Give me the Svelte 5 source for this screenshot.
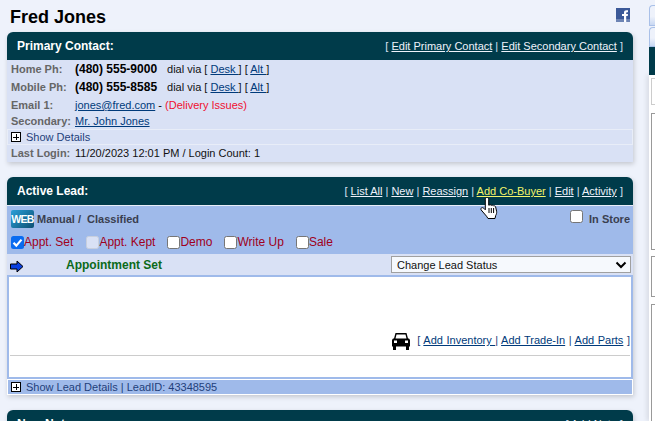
<script>
  const phones = [
    { label: 'Home Ph:', num: '(480) 555-9000' },
    { label: 'Mobile Ph:', num: '(480) 555-8585' }
  ];
  const checks = [
    { label: 'Appt. Set', kind: 'on' },
    { label: 'Appt. Kept', kind: 'off' },
    { label: 'Demo', kind: '' },
    { label: 'Write Up', kind: '' },
    { label: 'Sale', kind: '' }
  ];
</script>

<div class="page">
  <main class="col">
    <div class="title-row">
      <h1>Fred Jones</h1>
      <svg class="fb" width="14" height="14" viewBox="0 0 14 14">
        <rect width="14" height="14" fill="#3b5998" />
        <rect y="11" width="14" height="3" fill="#6d84b4" />
        <path d="M8 14V8H6V6h2V4.500C8 3 9 2.300 10.300 2.300H12v2h-1c-.6 0-.8.3-.8.8V6H12l-.3 2h-1.500v6z" fill="#fff" />
      </svg>
    </div>

    <section class="panel">
      <header>
        <b>Primary Contact:</b>
        <span class="links">[ <a href="#a">Edit Primary Contact</a> | <a href="#a">Edit Secondary Contact</a> ]</span>
      </header>
      <div class="contact">
        {#each phones as p}
          <div class="row phone">
            <span class="lbl">{p.label}</span>
            <b class="num">{p.num}</b>
            <span class="dial">dial via [ <a href="#a">Desk&nbsp;</a>] [ <a href="#a">Alt&nbsp;</a>]</span>
          </div>
        {/each}
        <div class="row email">
          <span class="lbl">Email 1:</span>
          <a href="#a">jones@fred.com</a>&nbsp;- <span class="red">(Delivery Issues)</span>
        </div>
        <div class="row second">
          <span class="lbl">Secondary:</span>
          <a href="#a">Mr. John Jones</a>
        </div>
        <div class="details">
          <span class="plus"></span>
          <span>Show Details</span>
        </div>
        <div class="row login">
          <span class="lbl">Last Login:</span>
          <span>11/20/2023 12:01 PM / Login Count: 1</span>
        </div>
      </div>
    </section>

    <section class="panel">
      <header>
        <b>Active Lead:</b>
        <span class="links">[ <a href="#a">List All</a> | <a href="#a">New</a> | <a href="#a">Reassign</a> | <a href="#a" class="hover">Add Co-Buyer</a> | <a href="#a">Edit</a> | <a href="#a">Activity</a> ]</span>
      </header>
      <div class="lead">
        <div class="source">
          <span class="web">WEB</span>
          <span class="src-text">Manual /&nbsp; Classified</span>
          <span class="store"><i class="box"></i>In Store</span>
        </div>
        <div class="checks">
          {#each checks as c}
            <span class="check">
              <i class="box {c.kind}">
                {#if c.kind === 'on'}
                  <svg width="13" height="13" viewBox="0 0 13 13"><path d="M2.500 6.800l2.800 2.800 5.200-6" fill="none" stroke="#fff" stroke-width="2.200" /></svg>
                {/if}
              </i>{c.label}
            </span>
          {/each}
        </div>
        <div class="status">
          <svg class="arrow" width="14" height="13" viewBox="0 0 14 13">
            <path d="M.5 4h6.500V1l6 5.500-6 5.500V9H.5z" fill="#0a3fe0" stroke="#000" />
          </svg>
          <b>Appointment Set</b>
          <span class="select">Change Lead Status
            <svg width="12" height="8" viewBox="0 0 12 8"><path d="M1.500 1.500L6 6l4.500-4.500" fill="none" stroke="#000" stroke-width="2" /></svg>
          </span>
        </div>
        <div class="work">
          <div class="inv">
            <svg width="18" height="17" viewBox="0 0 18 17">
              <path fill="#000" fill-rule="evenodd" d="M3.500 0h11l1.500 5.500h1l1 1.500v6.500h-1V17h-3v-3.500H4V17H1v-3.500H0V7l1-1.500h1zM4.500 1.500L3.500 5.500h11l-1-4zM2 7.500v2.500h3V7.500zm11 0v2.500h3V7.500z" />
            </svg>
            <span class="inv-links">[ <a href="#a">Add Inventory&nbsp;</a>| <a href="#a">Add Trade-In</a> | <a href="#a">Add Parts</a> ]</span>
          </div>
          <div class="rule"></div>
        </div>
        <div class="lead-foot">
          <span class="plus"></span>
          <span>Show Lead Details | LeadID: 43348595</span>
        </div>
      </div>
    </section>

    <section class="panel">
      <header>
        <b>New Note:</b>
        <span class="links">[ <a href="#a">Add Note</a> ]</span>
      </header>
    </section>
  </main>

  <aside class="side">
    <div class="tab"></div>
    <div class="tab second-tab"></div>
    <div class="side-head"></div>
    <div class="side-body">
      <div class="side-box light"></div>
      <div class="side-box one"></div>
      <div class="side-box two"></div>
      <div class="side-box three"></div>
    </div>
  </aside>

  <svg class="cursor" width="20" height="22" viewBox="0 0 20 22">
    <path d="M7 .5c1 0 1.700.7 1.700 1.700v6l1.300-.4c.7-.2 1.300.1 1.600.6.7-.4 1.600-.2 2 .5.800-.3 1.700.1 2 .9l1 4.500c.3 1.600-.2 3-.9 4.200L15 21.500H8l-1.500-2.300L1.200 13c-.6-.8-.3-1.800.4-2.200.7-.4 1.700-.1 2.300.6l1.400 1.400V2.200C5.300 1.200 6 .5 7 .5z" fill="#fff" stroke="#000" />
    <path d="M9 11v5M11.300 11v5M13.600 11v5" stroke="#000" fill="none" />
  </svg>
</div>

<style>
  :global(body) {
    margin: 0;
    background: #eef2fb;
    overflow: hidden;
  }
  .page {
    position: relative;
    display: flex;
    height: 421px;
    overflow: hidden;
    font-family: "Liberation Sans", Arial, sans-serif;
    font-size: 11px;
    color: #000;
  }
  .col {
    width: 626px;
    margin-left: 7px;
    flex: none;
  }
  .title-row {
    display: flex;
    justify-content: space-between;
    align-items: flex-start;
    height: 32px;
  }
  h1 {
    margin: 6px 0 0 3px;
    font-size: 18px;
    line-height: 22px;
  }
  .fb {
    margin: 8px 3px 0 0;
  }
  .panel {
    margin-bottom: 15px;
    border-radius: 6px 6px 0 0;
    box-shadow: 1px 2px 5px rgba(0, 0, 0, .18);
  }
  header {
    display: flex;
    justify-content: space-between;
    align-items: center;
    height: 28px;
    padding: 0 10px;
    background: #003b4a;
    border-radius: 6px 6px 0 0;
    color: #fff;
    font-size: 12px;
  }
  .links {
    color: #d8e0f3;
    font-size: 11px;
  }
  .links a {
    color: #eef2fb;
  }
  .links a.hover {
    color: #f4f46a;
  }
  .contact {
    background: #d9e1f5;
  }
  .row {
    display: flex;
    align-items: baseline;
    padding-left: 4px;
    white-space: pre-wrap;
  }
  .lbl {
    width: 64px;
    flex: none;
    color: #666;
    font-weight: bold;
  }
  a {
    color: #003a7a;
    text-decoration: underline;
  }
  .phone {
    height: 18px;
    line-height: 18px;
  }
  .num {
    font-size: 12px;
    margin-right: 10px;
  }
  .dial {
    color: #111;
  }
  .email {
    height: 18px;
    line-height: 18px;
  }
  .red {
    color: #f01030;
  }
  .second {
    height: 15px;
    line-height: 15px;
  }
  .details {
    display: flex;
    align-items: center;
    gap: 5px;
    height: 14px;
    border: 1px solid #e8edf8;
    padding-left: 3px;
    color: #1f3f7a;
  }
  .plus {
    width: 8px;
    height: 8px;
    flex: none;
    border: 1px solid #000;
    background: #fff;
    background-image: linear-gradient(#000, #000), linear-gradient(#000, #000);
    background-size: 6px 1px, 1px 6px;
    background-position: center;
    background-repeat: no-repeat;
  }
  .login {
    height: 17px;
    line-height: 17px;
    color: #111;
  }
  .lead {
    background: #9fbaea;
    border-top: 1px solid #e8edf8;
  }
  .source {
    display: flex;
    align-items: center;
    height: 26px;
    padding: 0 3px 0 4px;
  }
  .web {
    width: 23px;
    height: 18px;
    margin-right: 3px;
    border-radius: 2px;
    background: linear-gradient(135deg, #2a9fd8, #0d4f72);
    color: #fff;
    font: bold 10.500px/18px "Liberation Sans", sans-serif;
    text-align: center;
    letter-spacing: -.7px;
  }
  .src-text {
    color: #3a3f50;
    font-weight: bold;
    white-space: pre;
  }
  .store {
    display: flex;
    align-items: center;
    margin-left: auto;
    color: #3a3f50;
    font-weight: bold;
  }
  .store .box {
    margin: 0 6px 6px 0;
  }
  .box {
    display: inline-flex;
    flex: none;
    box-sizing: border-box;
    width: 13px;
    height: 13px;
    border: 1px solid #767676;
    border-radius: 2.500px;
    background: #fff;
  }
  .box.on {
    border: 0;
    background: #0a6cf0;
  }
  .box.off {
    border-color: #c8cfdd;
    background: #d9e1f5;
  }
  .checks {
    display: flex;
    gap: 12px;
    height: 20px;
    padding: 0 0 2px 4px;
    align-items: center;
    color: #a00020;
    font-size: 12px;
  }
  .check {
    display: flex;
    align-items: center;
  }
  .check:first-child {
    margin-right: 1px;
  }
  .status {
    display: flex;
    align-items: center;
    height: 21px;
    padding: 0 2px 0 3px;
    background: #d9e1f5;
  }
  .arrow {
    margin: 4px 42px 0 0;
  }
  .status b {
    color: #0b6a1a;
    font-size: 12px;
  }
  .select {
    display: flex;
    align-items: center;
    justify-content: space-between;
    box-sizing: border-box;
    width: 240px;
    height: 17px;
    margin-left: auto;
    padding: 0 3px 0 5px;
    border: 1px solid #a0a0a0;
    background: #f6f9fd;
    color: #111;
  }
  .work {
    display: flex;
    flex-direction: column;
    justify-content: flex-end;
    box-sizing: border-box;
    height: 104px;
    border: 2px solid #9fbaea;
    background: #fff;
    padding: 0 1px 21px;
  }
  .inv {
    display: flex;
    align-items: center;
    justify-content: flex-end;
    gap: 7px;
    color: #1f3f7a;
    margin-bottom: 5px;
    word-spacing: .5px;
  }
  .inv-links {
    padding-bottom: 3px;
  }
  .rule {
    height: 1px;
    background: #ccc;
  }
  .lead-foot {
    display: flex;
    align-items: center;
    gap: 5px;
    height: 14px;
    border: 1px solid #fff;
    padding-left: 3px;
    color: #1f3f7a;
  }
  .side {
    display: flex;
    flex-direction: column;
    flex: none;
    width: 6px;
    margin-left: 16px;
    padding-top: 5px;
  }
  .tab {
    box-sizing: border-box;
    flex: none;
    height: 21px;
    border: 1px solid #a9c0e8;
    border-right: 0;
    border-radius: 4px 0 0 0;
    background: linear-gradient(#eef2fb 55%, #c9d8f2);
  }
  .second-tab {
    height: 20px;
    margin-top: 1px;
  }
  .side-head {
    height: 28px;
    flex: none;
    background: #003b4a;
  }
  .side-body {
    flex: 1;
    min-height: 0;
    padding: 3px 0 0 2px;
    background: #fff;
    box-shadow: -2px 0 5px rgba(0, 0, 0, .1);
  }
  .side-box {
    box-sizing: border-box;
    border: 1px solid #999;
    border-right: 0;
    background: #fff;
  }
  .side-box.light {
    height: 27px;
    border-color: #ccc;
  }
  .side-box.one {
    height: 137px;
    margin-top: 8px;
  }
  .side-box.two {
    height: 41px;
    margin-top: 6px;
  }
  .side-box.three {
    height: 130px;
    margin-top: 7px;
  }
  .cursor {
    position: absolute;
    left: 480px;
    top: 197px;
  }
</style>
